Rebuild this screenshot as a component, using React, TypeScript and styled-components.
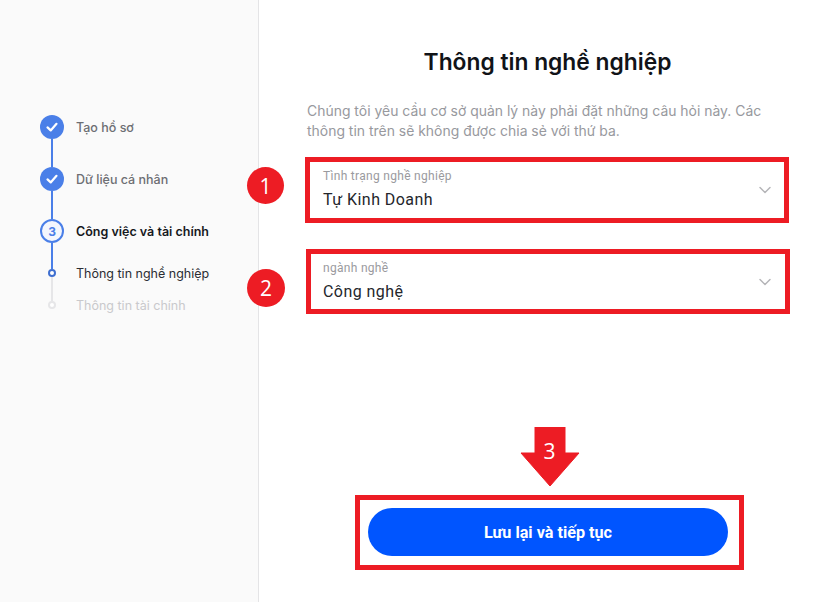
import React from "react";
import styled, { createGlobalStyle } from "styled-components";
import { ChevronDown } from "lucide-react";

const RED = "#ed1c24";
const BLUE = "#4a7fe8";

const GlobalStyle = createGlobalStyle`
  html, body {
    margin: 0;
    background: #fff;
    height: 100%;
    overflow: hidden;
  }
  #root {
    height: 100%;
  }
`;

const Page = styled.div`
  display: flex;
  width: 828px;
  height: 602px;
`;

const Sidebar = styled.aside`
  width: 259px;
  flex-shrink: 0;
  box-sizing: border-box;
  padding: 115px 0 0 40px;
  background: #fafafa;
  border-right: 1px solid #e4e4e6;
  font-family: Inter, sans-serif;
`;

const Step = styled.div<{ $height: number }>`
  display: flex;
  gap: 12px;
  height: ${(p) => p.$height}px;
`;

const Rail = styled.div`
  display: flex;
  flex-direction: column;
  align-items: center;
  width: 24px;
  flex-shrink: 0;
`;

const Line = styled.div<{ $muted?: boolean; $height?: number }>`
  width: 2px;
  flex: ${(p) => (p.$height ? "none" : 1)};
  height: ${(p) => (p.$height ? `${p.$height}px` : "auto")};
  background: ${(p) => (p.$muted ? "#e6e6e8" : BLUE)};
`;

const DoneCircle = styled.div`
  display: flex;
  align-items: center;
  justify-content: center;
  width: 24px;
  height: 24px;
  flex-shrink: 0;
  border-radius: 50%;
  background: ${BLUE};
`;

const NumberCircle = styled.div`
  display: flex;
  align-items: center;
  justify-content: center;
  box-sizing: border-box;
  width: 24px;
  height: 24px;
  flex-shrink: 0;
  border-radius: 50%;
  border: 2px solid ${BLUE};
  background: #f3f6fd;
  color: ${BLUE};
  font-size: 12px;
  font-weight: 700;
`;

const Dot = styled.div<{ $muted?: boolean }>`
  box-sizing: border-box;
  width: 8px;
  height: 8px;
  flex-shrink: 0;
  border-radius: 50%;
  border: 2px solid ${(p) => (p.$muted ? "#e6e6e8" : "#3f6fd0")};
  background: #fff;
`;

const StepLabel = styled.div<{ $active?: boolean }>`
  height: 24px;
  padding-top: 1px;
  line-height: 24px;
  font-size: 12.5px;
  font-weight: ${(p) => (p.$active ? 600 : 500)};
  color: ${(p) => (p.$active ? "#16181d" : "#6d6e73")};
  white-space: nowrap;
`;

const SubLabel = styled.div<{ $muted?: boolean }>`
  align-self: flex-end;
  height: 19px;
  line-height: 20px;
  font-size: 12.5px;
  color: ${(p) => (p.$muted ? "#c9c9cc" : "#2b2d33")};
  white-space: nowrap;
`;

const Gap = styled.div`
  height: 6px;
  flex-shrink: 0;
`;

const Main = styled.main`
  flex: 1;
  display: flex;
  flex-direction: column;
  padding: 0 38px 0 46px;
`;

const Title = styled.h1`
  margin: 45px 0 0;
  font-family: Inter, sans-serif;
  font-size: 22.8px;
  line-height: 34px;
  font-weight: 600;
  color: #111318;
  text-align: center;
`;

const Intro = styled.p`
  margin: 22px 0 0 2px;
  font-family: Inter, sans-serif;
  font-size: 13.94px;
  line-height: 20px;
  color: #98999e;
`;

const Field = styled.div<{ $nudge?: number; $top: number; $height: number }>`
  position: relative;
  box-sizing: border-box;
  display: flex;
  align-items: center;
  justify-content: space-between;
  width: 484px;
  height: ${(p) => p.$height}px;
  margin: ${(p) => p.$top}px 0 0 ${(p) => p.$nudge ?? 0}px;
  padding: 0 ${(p) => 9 + (p.$nudge ?? 0)}px 0 ${(p) => 13 - (p.$nudge ?? 0)}px;
  border: 5px solid ${RED};
  font-family: Roboto, sans-serif;
`;

const FieldText = styled.div`
  display: flex;
  flex-direction: column;
  align-self: flex-start;
  padding-top: 7px;
`;

const FieldLabel = styled.span`
  font-size: 12px;
  line-height: 14px;
  letter-spacing: 0.3px;
  color: #9a9a9e;
`;

const FieldValue = styled.span`
  margin-top: 7px;
  font-size: 16px;
  line-height: 20px;
  letter-spacing: 0.45px;
  color: #24262b;
`;

const Badge = styled.div<{ $size: number; $left: number; $top: number }>`
  position: absolute;
  left: ${(p) => p.$left}px;
  top: ${(p) => p.$top}px;
  display: flex;
  align-items: center;
  justify-content: center;
  width: ${(p) => p.$size}px;
  height: ${(p) => p.$size}px;
  border-radius: 50%;
  background: ${RED};
  color: #fff;
  font-family: "Open Sans", sans-serif;
  font-size: 21px;
`;

const SubmitArea = styled.div`
  display: flex;
  flex-direction: column;
  align-items: center;
  align-self: flex-start;
  margin: 113px 0 0 50px;
`;

const ArrowWrap = styled.div`
  position: relative;
  width: 60px;
  height: 60px;
  margin-bottom: 8px;
`;

const ArrowNumber = styled.span`
  position: absolute;
  top: 11px;
  left: 0;
  width: 60px;
  text-align: center;
  color: #fff;
  font-family: "Open Sans", sans-serif;
  font-size: 21px;
  line-height: 26px;
`;

const ButtonFrame = styled.div`
  box-sizing: border-box;
  width: 389px;
  height: 75px;
  padding: 8px 11px 9px 8px;
  border: 5px solid ${RED};
`;

const SaveButton = styled.button`
  display: block;
  width: 360px;
  height: 48px;
  border: 0;
  border-radius: 24px;
  background: #0055ff;
  color: #fff;
  font-family: Roboto, sans-serif;
  font-size: 16.2px;
  font-weight: 700;
`;

const Check = () => (
  <svg width="14" height="14" viewBox="0 0 14 14" fill="none">
    <path d="M2.5 7.4 5.7 10.4 11.5 3.8" stroke="#fff" strokeWidth="2.2" strokeLinecap="round" strokeLinejoin="round" />
  </svg>
);

const App = () => {
  return (
    <Page>
      <GlobalStyle />
      <Sidebar>
        <Step $height={52}>
          <Rail>
            <DoneCircle>
              <Check />
            </DoneCircle>
            <Line />
          </Rail>
          <StepLabel>Tạo hồ sơ</StepLabel>
        </Step>
        <Step $height={52}>
          <Rail>
            <DoneCircle>
              <Check />
            </DoneCircle>
            <Line />
          </Rail>
          <StepLabel>Dữ liệu cá nhân</StepLabel>
        </Step>
        <Step $height={24}>
          <Rail>
            <NumberCircle>3</NumberCircle>
          </Rail>
          <StepLabel $active>Công việc và tài chính</StepLabel>
        </Step>
        <Step $height={40}>
          <Rail>
            <Line />
            <Dot />
            <Line $muted $height={6} />
          </Rail>
          <SubLabel>Thông tin nghề nghiệp</SubLabel>
        </Step>
        <Step $height={32}>
          <Rail>
            <Line $muted />
            <Dot $muted />
            <Gap />
          </Rail>
          <SubLabel $muted>Thông tin tài chính</SubLabel>
        </Step>
      </Sidebar>
      <Main>
        <Title>Thông tin nghề nghiệp</Title>
        <Intro>
          Chúng tôi yêu cầu cơ sở quản lý này phải đặt những câu hỏi này. Các thông tin trên sẽ không được chia sẻ với
          thứ ba.
        </Intro>
        <Field $top={16} $height={66}>
          <Badge $size={37} $left={-63} $top={5}>
            1
          </Badge>
          <FieldText>
            <FieldLabel>Tình trạng nghề nghiệp</FieldLabel>
            <FieldValue>Tự Kinh Doanh</FieldValue>
          </FieldText>
          <ChevronDown size={20} color="#b5b5b8" strokeWidth={1.75} />
        </Field>
        <Field $top={26} $nudge={1} $height={65}>
          <Badge $size={38} $left={-64} $top={15}>
            2
          </Badge>
          <FieldText>
            <FieldLabel>ngành nghề</FieldLabel>
            <FieldValue>Công nghệ</FieldValue>
          </FieldText>
          <ChevronDown size={20} color="#b5b5b8" strokeWidth={1.75} />
        </Field>
        <SubmitArea>
          <ArrowWrap>
            <svg width="60" height="60" viewBox="0 0 60 60">
              <path d="M15 0H45V26H59L30 59 1 26H15Z" fill={RED} stroke={RED} strokeLinejoin="round" />
            </svg>
            <ArrowNumber>3</ArrowNumber>
          </ArrowWrap>
          <ButtonFrame>
            <SaveButton>Lưu lại và tiếp tục</SaveButton>
          </ButtonFrame>
        </SubmitArea>
      </Main>
    </Page>
  );
};

export default App;
